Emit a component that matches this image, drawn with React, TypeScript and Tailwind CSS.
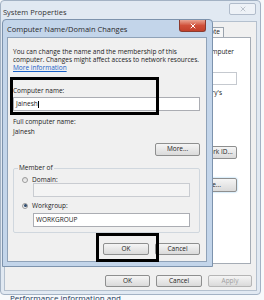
import { X } from 'lucide-react';

function Btn({ label, className = '' }: { label: string; className?: string }) {
  return (
    <div
      className={`flex shrink-0 items-center justify-center whitespace-nowrap rounded-[2px] border border-[#8e8f8f] bg-linear-to-b from-[#f5f5f5] to-[#dadada] text-[6.5px] leading-none text-[#1e1e1e] ${className}`}
    >
      {label}
    </div>
  );
}

function Radio({ checked }: { checked?: boolean }) {
  return (
    <span className="flex h-[6px] w-[6px] shrink-0 items-center justify-center rounded-full border border-[#9a9a9a] bg-linear-to-b from-[#dcdcdc] to-[#f6f6f6]">
      {checked && <span className="h-[3px] w-[3px] rounded-full bg-[#2e4b6e]" />}
    </span>
  );
}

export default function App() {
  return (
    <div className="relative h-[300px] w-[264px] overflow-hidden bg-[#f7f9fb] font-['Open_Sans',sans-serif] text-[#222]">
      {/* window underneath */}
      <p className="absolute left-[10px] top-[293px] whitespace-nowrap text-[8px] leading-[10px] text-[#1e3a5c]">
        Performance information and
      </p>

      {/* System Properties */}
      <div className="absolute left-0 top-0 flex h-[295px] w-[261px] flex-col rounded-[4px] border border-[#a3b2c4] bg-[#e1e9f2]">
        <div className="flex h-[20px] shrink-0 items-start justify-between">
          <span className="pl-[2px] pt-[6px] text-[7.5px] leading-[10px] text-[#333]">System Properties</span>
          <div className="mr-[4px] mt-[2px] flex h-[12px] w-[27px] items-center justify-center rounded-[2px] border border-[#b1bccb] bg-[#eef2f7]">
            <X size={8} strokeWidth={2} className="text-[#a2abb6]" />
          </div>
        </div>

        <div className="mx-[3px] mb-[3px] flex flex-1 flex-col border border-[#b4c0ce] bg-[#f0f0f0]">
          {/* tabs */}
          <div className="flex h-[15px] shrink-0 items-end justify-end pr-[32px]">
            <div className="flex h-[10px] items-center border border-b-0 border-[#9aa3ad] bg-[#f6f6f6] px-[3px] text-[6.5px] leading-none">
              Remote
            </div>
          </div>

          {/* tab panel */}
          <div className="ml-[4px] mr-[5px] flex h-[227px] shrink-0 flex-col overflow-hidden border border-[#a5acb5] bg-white text-[6.5px]">
            <div className="mt-[10px] flex justify-end whitespace-nowrap pr-[16px] leading-[8px]">
              computer
            </div>
            <div className="mt-[16px] flex justify-end pr-[13px]">
              <div className="h-[13px] w-[120px] shrink-0 border border-[#c5c9cf] bg-white" />
            </div>
            <div className="mt-[4px] flex justify-end whitespace-nowrap pr-[28px] leading-[8px]">
              Mary's
            </div>
            <div className="mt-[49px] flex justify-end pr-[13px]">
              <Btn label="Network ID..." className="h-[13px] w-[48px]" />
            </div>
            <div className="mt-[19px] flex justify-end pr-[13px]">
              <Btn
                label="Change..."
                className="h-[14px] w-[60px] border-[#3d8ecf] shadow-[0_0_2px_#7fc3f0]"
              />
            </div>
          </div>

          <div className="mt-[11px] flex justify-end gap-[6px] pr-[4px]">
            <Btn label="OK" className="h-[12px] w-[45px]" />
            <Btn label="Cancel" className="h-[12px] w-[46px]" />
            <Btn label="Apply" className="h-[12px] w-[44px] border-[#b5b5b5] text-[#a0a0a0]" />
          </div>
        </div>
      </div>

      {/* Computer Name/Domain Changes */}
      <div className="absolute left-[2px] top-[19px] flex h-[248px] w-[211px] flex-col rounded-t-[4px] border border-[#7d93ad] bg-[#c3d5ea]">
        <div className="flex h-[17px] shrink-0 items-start justify-between">
          <span className="pl-[4px] pt-[4px] text-[7.5px] leading-[10px] text-[#2a2a2a]">Computer Name/Domain Changes</span>
          <div className="mr-[6px] flex h-[12px] w-[27px] items-center justify-center rounded-b-[3px] border border-t-0 border-[#8c3a2e] bg-linear-to-b from-[#e8a493] via-[#d0503a] to-[#c2402a]">
            <X size={8} strokeWidth={3} className="text-white" />
          </div>
        </div>

        <div className="mb-[4px] ml-[4px] mr-[5px] flex flex-1 flex-col border border-[#8fa2b8] bg-[#f0f0f0] pl-[5px] pr-[6px] text-[6.5px]">
          <div className="mt-[10px] leading-[8px]">
            <p className="whitespace-nowrap">You can change the name and the membership of this</p>
            <p className="whitespace-nowrap">computer. Changes might affect access to network resources.</p>
            <p className="text-[#1a62c8] underline">More information</p>
          </div>

          <p className="mt-[15px] leading-[8px]">Computer name:</p>
          <div className="mt-[2px] flex h-[14px] items-center border border-[#abadb3] bg-white px-[2px]">
            <span>Jainesh</span>
            <span className="h-[7px] w-px bg-black" />
          </div>

          <div className="mt-[6px] leading-[10px]">
            <p>Full computer name:</p>
            <p>Jainesh</p>
          </div>

          <Btn label="More..." className="mt-[6px] h-[13px] w-[45px] self-end" />

          <fieldset className="mt-[8px] rounded-[2px] border border-[#d0d7de] pb-[5px]">
            <legend className="ml-[4px] px-[1px] leading-[8px]">Member of</legend>
            <div className="mt-[4px] flex items-center gap-[4px] pl-[8px] leading-[7px]">
              <Radio />
              <span>Domain:</span>
            </div>
            <div className="ml-[19px] mr-[9px] h-[14px] border border-[#c9ccd1] bg-[#f4f4f4]" />
            <div className="mt-[5px] flex items-center gap-[4px] pl-[8px] leading-[7px]">
              <Radio checked />
              <span>Workgroup:</span>
            </div>
            <div className="ml-[19px] mr-[9px] mt-[4px] flex h-[14px] items-center border border-[#abadb3] bg-white px-[2px]">
              WORKGROUP
            </div>
          </fieldset>

          <div className="mt-[10px] flex justify-end gap-[6px]">
            <Btn label="OK" className="h-[12px] w-[46px] border-[#3c7fb1] from-[#eaf6fd] to-[#bee6fd]" />
            <Btn label="Cancel" className="h-[12px] w-[45px]" />
          </div>
        </div>
      </div>

      {/* highlight boxes */}
      <div className="absolute left-[10px] top-[77px] h-[38px] w-[149px] border-[3px] border-black" />
      <div className="absolute left-[96px] top-[233px] h-[29px] w-[63px] border-[3px] border-black" />
    </div>
  );
}
